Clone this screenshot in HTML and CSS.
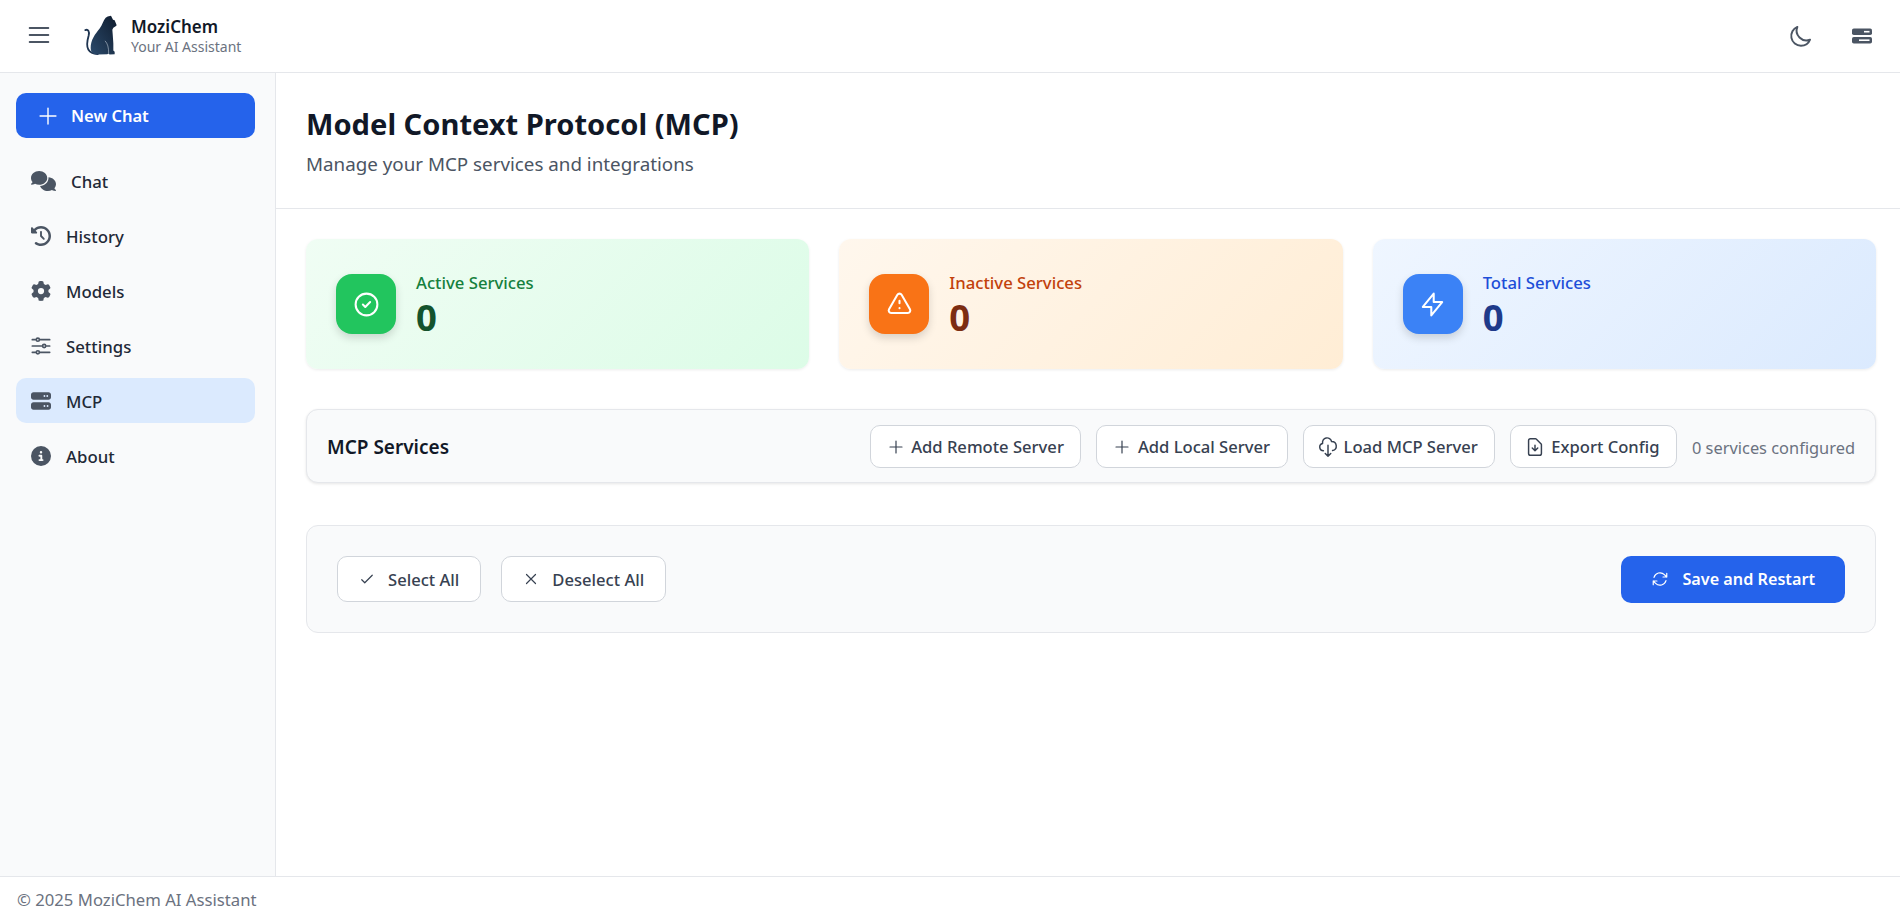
FILE: index.html
```html
<!DOCTYPE html>
<html lang="en">
<head>
  <meta charset="UTF-8">
  <title>MoziChem - MCP</title>
  <link rel="stylesheet" href="styles.css">
</head>
<body>

  <!-- Top bar -->
  <header class="topbar">
    <div class="topbar-left">
      <button class="icon-btn menu-btn">
        <svg viewBox="0 0 24 24" class="stroke-icon menu-icon"><path d="M4 6h16M4 12h16M4 18h16"/></svg>
      </button>
      <svg class="logo" viewBox="250 45 102 122">
        <defs>
          <linearGradient id="catFill" x1="0" y1="1" x2="1" y2="0">
            <stop offset="0" stop-color="#2b4a6b"/>
            <stop offset="1" stop-color="#0f1c2e"/>
          </linearGradient>
        </defs>
        <path fill="none" stroke="#1e3450" stroke-width="5.5" stroke-linecap="round" d="M254 90c8-4 13 4 10 16-4 14-8 30-1 42 5 9 14 13 28 14"/>
        <path fill="url(#catFill)" d="M331 47l6 12 5 1 6 15-3 3-7 5-3 6 1 12 2 28 0 22 4 4v7l-15 1-4-3-3 2-29 1c-13 0-21-6-21-20 0-24 14-42 27-58 8-10 11-24 18-32l6-4z"/>
        <path fill="none" stroke="#dfe6ee" stroke-width="1.5" d="M313 122c8 8 11 20 11 38"/>
      </svg>
      <div class="brand">
        <div class="brand-name">MoziChem</div>
        <div class="brand-sub">Your AI Assistant</div>
      </div>
    </div>
    <div class="topbar-right">
      <button class="icon-btn">
        <svg viewBox="0 0 24 24" class="stroke-icon moon-icon"><path d="M20.354 15.354A9 9 0 018.646 3.646 9.003 9.003 0 0012 21a9.003 9.003 0 008.354-5.646z"/></svg>
      </button>
      <button class="icon-btn">
        <svg viewBox="0 0 20 16" class="server-icon">
          <rect x="0" y="0.5" width="20" height="6.5" rx="1.8" fill="#4b5563"/>
          <rect x="0" y="9" width="20" height="6.5" rx="1.8" fill="#4b5563"/>
          <rect x="12" y="2.9" width="5.5" height="1.6" fill="#fff"/>
          <rect x="7" y="11.4" width="10.5" height="1.6" fill="#fff"/>
        </svg>
      </button>
    </div>
  </header>

  <div class="layout">

    <!-- Sidebar -->
    <aside class="sidebar">
      <button class="new-chat">
        <svg viewBox="0 0 24 24" class="new-chat-icon"><path d="M12 2.5v19M2.5 12h19"/></svg>
        New Chat
      </button>
      <nav class="nav">
        <a class="nav-item nav-chat">
          <svg class="nav-icon chat-icon" viewBox="0 0 640 512"><path d="M208 352c114.9 0 208-78.8 208-176S322.9 0 208 0S0 78.8 0 176c0 38.6 14.7 74.3 39.6 103.4c-3.5 9.4-8.7 17.7-14.2 24.7c-4.8 6.2-9.7 11-13.3 14.3c-1.8 1.6-3.3 2.9-4.3 3.7c-.5 .4-.9 .7-1.1 .8l-.2 .2 0 0 0 0C1 327.2-1.4 334.4 .8 340.9S9.1 352 16 352c21.8 0 43.8-5.6 62.1-12.5c9.2-3.5 17.8-7.4 25.3-11.4C134.1 343.3 169.8 352 208 352zM448 176c0 112.3-99.1 196.9-216.5 207C255.8 457.4 336.4 512 432 512c38.2 0 73.9-8.7 104.7-23.9c7.5 4 16 7.9 25.2 11.4c18.3 6.9 40.3 12.5 62.1 12.5c6.9 0 13.1-4.5 15.2-11.1c2.1-6.6-.2-13.8-5.8-17.9l0 0 0 0-.2-.2c-.2-.2-.6-.4-1.1-.8c-1-.8-2.5-2-4.3-3.7c-3.6-3.3-8.5-8.1-13.3-14.3c-5.5-7-10.7-15.4-14.2-24.7c24.9-29 39.6-64.7 39.6-103.4c0-92.8-84.9-168.9-192.6-175.5c.4 5.1 .6 10.3 .6 15.5z"/></svg>
          Chat
        </a>
        <a class="nav-item">
          <svg class="nav-icon" viewBox="0 0 512 512"><path d="M75 75L41 41C25.9 25.9 0 36.6 0 57.9V168c0 13.3 10.7 24 24 24H134.1c21.4 0 32.1-25.9 17-41l-30.8-30.8C155 85.5 203 64 256 64c106 0 192 86 192 192s-86 192-192 192c-40.8 0-78.6-12.7-109.7-34.4c-14.5-10.1-34.4-6.6-44.6 7.9s-6.6 34.4 7.9 44.6C151.2 495 201.7 512 256 512c141.4 0 256-114.6 256-256S397.4 0 256 0C185.3 0 121.3 28.7 75 75zm181 53c-13.3 0-24 10.7-24 24V256c0 6.4 2.5 12.5 7 17l72 72c9.4 9.4 24.6 9.4 33.9 0s9.4-24.6 0-33.9l-65-65V152c0-13.3-10.7-24-24-24z"/></svg>
          History
        </a>
        <a class="nav-item">
          <svg class="nav-icon" viewBox="0 0 512 512"><path d="M495.9 166.6c3.2 8.7 .5 18.4-6.4 24.6l-43.3 39.4c1.1 8.3 1.7 16.8 1.7 25.4s-.6 17.1-1.7 25.4l43.3 39.4c6.9 6.2 9.6 15.9 6.4 24.6c-4.4 11.9-9.7 23.3-15.8 34.3l-4.7 8.1c-6.6 11-14 21.4-22.1 31.2c-5.9 7.2-15.7 9.6-24.5 6.8l-55.7-17.7c-13.4 10.3-28.2 18.9-44 25.4l-12.5 57.1c-2 9.1-9 16.3-18.2 17.8c-13.8 2.3-28 3.5-42.5 3.5s-28.7-1.2-42.5-3.5c-9.2-1.5-16.2-8.7-18.2-17.8l-12.5-57.1c-15.8-6.5-30.6-15.1-44-25.4L83.1 425.9c-8.8 2.8-18.6 .3-24.5-6.8c-8.1-9.8-15.5-20.2-22.1-31.2l-4.7-8.1c-6.1-11-11.4-22.4-15.8-34.3c-3.2-8.7-.5-18.4 6.4-24.6l43.3-39.4C64.6 273.1 64 264.6 64 256s.6-17.1 1.7-25.4L22.4 191.2c-6.9-6.2-9.6-15.9-6.4-24.6c4.4-11.9 9.7-23.3 15.8-34.3l4.7-8.1c6.6-11 14-21.4 22.1-31.2c5.9-7.2 15.7-9.6 24.5-6.8l55.7 17.7c13.4-10.3 28.2-18.9 44-25.4l12.5-57.1c2-9.1 9-16.3 18.2-17.8C227.3 1.2 241.5 0 256 0s28.7 1.2 42.5 3.5c9.2 1.5 16.2 8.7 18.2 17.8l12.5 57.1c15.8 6.5 30.6 15.1 44 25.4l55.7-17.7c8.8-2.8 18.6-.3 24.5 6.8c8.1 9.8 15.5 20.2 22.1 31.2l4.7 8.1c6.1 11 11.4 22.4 15.8 34.3zM256 336a80 80 0 1 0 0-160 80 80 0 1 0 0 160z"/></svg>
          Models
        </a>
        <a class="nav-item">
          <svg class="nav-icon nav-stroke" viewBox="2.5 3 19 18"><path d="M10.5 6h9.75M10.5 6a1.5 1.5 0 11-3 0m3 0a1.5 1.5 0 10-3 0M3.75 6H7.5m3 12h9.75m-9.75 0a1.5 1.5 0 01-3 0m3 0a1.5 1.5 0 00-3 0m-3.75 0H7.5m9-6h3.75m-3.75 0a1.5 1.5 0 01-3 0m3 0a1.5 1.5 0 00-3 0m-9.75 0h9.75"/></svg>
          Settings
        </a>
        <a class="nav-item active">
          <svg class="nav-icon" viewBox="0 0 512 512"><path d="M64 32C28.7 32 0 60.7 0 96v64c0 35.3 28.7 64 64 64H448c35.3 0 64-28.7 64-64V96c0-35.3-28.7-64-64-64H64zm280 72a24 24 0 1 1 0 48 24 24 0 1 1 0-48zm48 24a24 24 0 1 1 48 0 24 24 0 1 1 -48 0zM64 288c-35.3 0-64 28.7-64 64v64c0 35.3 28.7 64 64 64H448c35.3 0 64-28.7 64-64V352c0-35.3-28.7-64-64-64H64zm280 72a24 24 0 1 1 0 48 24 24 0 1 1 0-48zm56 24a24 24 0 1 1 48 0 24 24 0 1 1 -48 0z"/></svg>
          MCP
        </a>
        <a class="nav-item">
          <svg class="nav-icon" viewBox="0 0 512 512"><path d="M256 512A256 256 0 1 0 256 0a256 256 0 1 0 0 512zM216 336h24V272H216c-13.3 0-24-10.7-24-24s10.7-24 24-24h48c13.3 0 24 10.7 24 24v88h8c13.3 0 24 10.7 24 24s-10.7 24-24 24H216c-13.3 0-24-10.7-24-24s10.7-24 24-24zm40-208a32 32 0 1 1 0 64 32 32 0 1 1 0-64z"/></svg>
          About
        </a>
      </nav>
    </aside>

    <!-- Main content -->
    <main class="main">
      <div class="page-header">
        <h1>Model Context Protocol (MCP)</h1>
        <p>Manage your MCP services and integrations</p>
      </div>

      <div class="page-body">
        <div class="stats">
          <div class="stat-card stat-green">
            <div class="stat-icon">
              <svg viewBox="0 0 24 24" class="stroke-icon"><path d="M9 12l2 2 4-4m6 2a9 9 0 11-18 0 9 9 0 0118 0z"/></svg>
            </div>
            <div class="stat-text">
              <div class="stat-label">Active Services</div>
              <div class="stat-value">0</div>
            </div>
          </div>
          <div class="stat-card stat-orange">
            <div class="stat-icon">
              <svg viewBox="0 0 24 24" class="stroke-icon"><path d="M12 9v2m0 4h.01m-6.938 4h13.856c1.54 0 2.502-1.667 1.732-3L13.732 4c-.77-1.333-2.694-1.333-3.464 0L3.34 16c-.77 1.333.192 3 1.732 3z"/></svg>
            </div>
            <div class="stat-text">
              <div class="stat-label">Inactive Services</div>
              <div class="stat-value">0</div>
            </div>
          </div>
          <div class="stat-card stat-blue">
            <div class="stat-icon">
              <svg viewBox="0 0 24 24" class="stroke-icon"><path d="M13 10V3L4 14h7v7l9-11h-7z"/></svg>
            </div>
            <div class="stat-text">
              <div class="stat-label">Total Services</div>
              <div class="stat-value">0</div>
            </div>
          </div>
        </div>

        <div class="services-bar">
          <h2>MCP Services</h2>
          <div class="services-actions">
            <button class="btn btn-small">
              <svg viewBox="0 0 24 24" class="stroke-icon btn-icon"><path d="M12 4v16m8-8H4"/></svg>
              Add Remote Server
            </button>
            <button class="btn btn-small">
              <svg viewBox="0 0 24 24" class="stroke-icon btn-icon"><path d="M12 4v16m8-8H4"/></svg>
              Add Local Server
            </button>
            <button class="btn btn-small btn-wide-icon">
              <svg viewBox="0 0 24 24" class="stroke-icon btn-icon"><path d="M7 16a4 4 0 01-.88-7.903A5 5 0 1115.9 6L16 6a5 5 0 011 9.9M9 19l3 3m0 0l3-3m-3-9v12"/></svg>
              Load MCP Server
            </button>
            <button class="btn btn-small btn-wide-icon">
              <svg viewBox="0 0 24 24" class="stroke-icon btn-icon"><path d="M12 10v6m0 0l-3-3m3 3l3-3m2 8H7a2 2 0 01-2-2V5a2 2 0 012-2h5.586a1 1 0 01.707.293l5.414 5.414a1 1 0 01.293.707V19a2 2 0 01-2 2z"/></svg>
              Export Config
            </button>
            <span class="services-count">0 services configured</span>
          </div>
        </div>

        <div class="actions-panel">
          <div class="actions-left">
            <button class="btn btn-large">
              <svg viewBox="0 0 24 24" class="stroke-icon btn-icon"><path d="M5 13l4 4L19 7"/></svg>
              Select All
            </button>
            <button class="btn btn-large">
              <svg viewBox="0 0 24 24" class="stroke-icon btn-icon"><path d="M6 18L18 6M6 6l12 12"/></svg>
              Deselect All
            </button>
          </div>
          <button class="btn-primary">
            <svg viewBox="0 0 24 24" class="stroke-icon btn-icon"><path d="M16.023 9.348h4.992v-.001M2.985 19.644v-4.992m0 0h4.992m-4.993 0l3.181 3.183a8.25 8.25 0 0013.803-3.7M4.031 9.865a8.25 8.25 0 0113.803-3.7l3.181 3.182m0-4.991v4.99"/></svg>
            Save and Restart
          </button>
        </div>
      </div>
    </main>
  </div>

  <footer class="footer">© 2025 MoziChem AI Assistant</footer>

</body>
</html>
```

FILE: styles.css
```css
/* Basic Reset */
* {
  margin: 0;
  padding: 0;
  box-sizing: border-box;
}

body {
  font-family: "Noto Sans", "Open Sans", sans-serif;
  display: flex;
  flex-direction: column;
  height: 100vh;
  background-color: #fff;
  color: #111827;
  overflow: hidden;
}

button {
  font-family: inherit;
  cursor: pointer;
}

.stroke-icon {
  fill: none;
  stroke: currentColor;
  stroke-width: 2;
  stroke-linecap: round;
  stroke-linejoin: round;
}

/* Top bar */
.topbar {
  height: 73px;
  flex-shrink: 0;
  display: flex;
  align-items: center;
  justify-content: space-between;
  padding: 0 28px 0 25px;
  border-bottom: 1px solid #e5e7eb;
}

.topbar-left {
  display: flex;
  align-items: center;
}

.topbar-right {
  display: flex;
  align-items: center;
  gap: 38px;
}

.icon-btn {
  background: none;
  border: none;
  color: #4b5563;
  display: flex;
  align-items: center;
  justify-content: center;
}

.menu-btn {
  margin-bottom: 2px;
}

.menu-icon {
  width: 28px;
  height: 28px;
  stroke-width: 1.6;
}

.moon-icon {
  width: 26px;
  height: 26px;
  stroke-width: 1.8;
}

.server-icon {
  width: 20px;
  height: 16px;
}

.logo {
  width: 34px;
  height: 41px;
  margin: 0 13px 2px 31px;
}

.brand-name {
  font-size: 17px;
  font-weight: 600;
  line-height: 21px;
}

.brand-sub {
  font-size: 14px;
  line-height: 20px;
  color: #6b7280;
}

/* Layout */
.layout {
  flex: 1;
  display: flex;
  min-height: 0;
}

/* Sidebar */
.sidebar {
  width: 276px;
  flex-shrink: 0;
  background-color: #f9fafb;
  border-right: 1px solid #e5e7eb;
  padding: 20px 20px 0 16px;
}

.new-chat {
  width: 100%;
  height: 45px;
  display: flex;
  align-items: center;
  gap: 13px;
  padding-left: 22px;
  background-color: #2563eb;
  color: #fff;
  border: none;
  border-radius: 10px;
  font-size: 16.5px;
  font-weight: 600;
}

.new-chat-icon {
  width: 20px;
  height: 20px;
  fill: none;
  stroke: #fff;
  stroke-width: 1.7;
  stroke-linecap: round;
}

.nav {
  margin-top: 20px;
  display: flex;
  flex-direction: column;
  gap: 10px;
}

.nav-item {
  height: 45px;
  display: flex;
  align-items: center;
  gap: 15px;
  padding: 1px 0 0 15px;
  border-radius: 10px;
  font-size: 16.8px;
  font-weight: 500;
  color: #1f2937;
}

.nav-item.active {
  background-color: #dbeafe;
}

.nav-icon {
  width: 20px;
  height: 20px;
  flex-shrink: 0;
  fill: #4b5563;
}

.chat-icon {
  width: 25px;
}

.nav-stroke {
  fill: none;
  stroke: #4b5563;
  stroke-width: 1.6;
  stroke-linecap: round;
}

/* Main */
.main {
  flex: 1;
  min-width: 0;
}

.page-header {
  height: 136px;
  padding: 31px 30px 0;
  border-bottom: 1px solid #e5e7eb;
}

.page-header h1 {
  font-size: 29.1px;
  line-height: 40px;
  font-weight: 700;
  color: #111827;
}

.page-header p {
  margin-top: 8px;
  font-size: 18.8px;
  line-height: 24px;
  color: #4b5563;
}

.page-body {
  padding: 30px 24px 0 30px;
}

/* Stat cards */
.stats {
  display: grid;
  grid-template-columns: repeat(3, 1fr);
  gap: 30px;
}

.stat-card {
  height: 130px;
  display: flex;
  align-items: center;
  gap: 20px;
  padding: 0 30px;
  border-radius: 12px;
  box-shadow: 0 1px 3px rgba(0, 0, 0, 0.08);
}

.stat-icon {
  width: 60px;
  height: 60px;
  border-radius: 16px;
  display: flex;
  align-items: center;
  justify-content: center;
  color: #fff;
  box-shadow: 0 4px 8px rgba(0, 0, 0, 0.15);
}

.stat-icon svg {
  width: 29px;
  height: 29px;
  stroke-width: 1.7;
}

.stat-text {
  padding-top: 2px;
}

.stat-label {
  font-size: 16.7px;
  font-weight: 500;
  line-height: 24px;
}

.stat-value {
  margin-top: -1px;
  font-size: 36.5px;
  font-weight: 700;
  line-height: 46px;
}

.stat-green {
  background: linear-gradient(135deg, #f0fdf4, #dcfce7);
}
.stat-green .stat-icon { background-color: #22c55e; }
.stat-green .stat-label { color: #15803d; }
.stat-green .stat-value { color: #14532d; }

.stat-orange {
  background: linear-gradient(135deg, #fff7ed, #ffedd5);
}
.stat-orange .stat-icon { background-color: #f97316; }
.stat-orange .stat-label { color: #c2410c; }
.stat-orange .stat-value { color: #7c2d12; }

.stat-blue {
  background: linear-gradient(135deg, #eff6ff, #dbeafe);
}
.stat-blue .stat-icon { background-color: #3b82f6; }
.stat-blue .stat-label { color: #1d4ed8; }
.stat-blue .stat-value { color: #1e3a8a; }

/* Services bar */
.services-bar {
  margin-top: 40px;
  height: 74px;
  display: flex;
  align-items: center;
  justify-content: space-between;
  padding: 0 20px;
  background-color: #f9fafb;
  border: 1px solid #e5e7eb;
  border-radius: 12px;
  box-shadow: 0 1px 3px rgba(0, 0, 0, 0.1);
}

.services-bar h2 {
  padding-top: 2px;
  font-size: 19px;
  font-weight: 600;
  color: #111827;
}

.services-actions {
  display: flex;
  align-items: center;
  gap: 15px;
}

.services-count {
  padding-top: 2px;
  font-size: 16.4px;
  color: #6b7280;
}

/* Buttons */
.btn {
  display: flex;
  align-items: center;
  background-color: #fff;
  border: 1px solid #d1d5db;
  border-radius: 10px;
  color: #374151;
  font-size: 16.6px;
  font-weight: 500;
}

.btn-small {
  height: 43px;
  gap: 6.5px;
  padding: 1px 16.5px 0 16px;
}

.btn-wide-icon {
  gap: 5px;
  padding-left: 13px;
}

.btn-wide-icon .btn-icon {
  width: 22px;
  height: 22px;
}

.btn-large {
  height: 46px;
  gap: 12px;
  padding: 0 21px 0 20px;
}

.btn-icon {
  width: 18px;
  height: 18px;
  flex-shrink: 0;
  stroke-width: 1.6;
}

.btn-primary {
  height: 47px;
  display: flex;
  align-items: center;
  gap: 13px;
  padding: 0 30px;
  background-color: #2563eb;
  color: #fff;
  border: none;
  border-radius: 10px;
  font-size: 16.2px;
  font-weight: 600;
}

/* Bottom actions */
.actions-panel {
  margin-top: 42px;
  height: 108px;
  display: flex;
  align-items: center;
  justify-content: space-between;
  padding: 0 30px;
  background-color: #f9fafb;
  border: 1px solid #e5e7eb;
  border-radius: 12px;
}

.actions-left {
  display: flex;
  gap: 20px;
}

/* Footer */
.footer {
  height: 41px;
  flex-shrink: 0;
  display: flex;
  align-items: center;
  padding: 4px 0 0 17px;
  border-top: 1px solid #e5e7eb;
  font-size: 16.7px;
  color: #6b7280;
}
```
